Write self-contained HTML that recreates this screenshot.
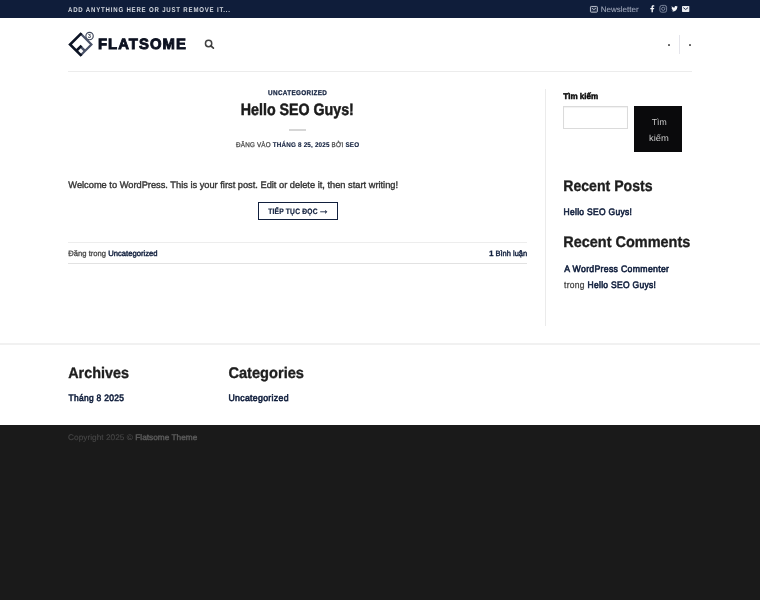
<!DOCTYPE html>
<html lang="vi">
<head>
<meta charset="utf-8">
<title>Flatsome</title>
<style>
html,body{margin:0;padding:0;}
body{width:760px;height:600px;position:relative;overflow:hidden;background:#1a1a1a;font-family:"Liberation Sans",sans-serif;}
#wrapper{position:absolute;left:0;top:0;width:760px;height:600px;will-change:transform;}
.g{position:absolute;left:0;top:0;width:0;height:0;margin:0;padding:0;border:0;}
.r{position:absolute;margin:0;padding:0;}
.t{position:absolute;margin:0;padding:0;white-space:nowrap;transform-origin:0 0;text-rendering:geometricPrecision;}
svg{position:absolute;overflow:visible;}
b,strong{font-weight:700;}
a{color:inherit;text-decoration:none;}
ul{list-style:none;}
input.r,button.r{font:inherit;outline:0;border-radius:0;-webkit-appearance:none;appearance:none;display:block;}
</style>
</head>
<body>
<div id="wrapper">

<!-- page backgrounds -->
<div class="r" style="left:0;top:0;width:760px;height:424.5px;background:#fff"></div>

<header class="g" id="header">
  <!-- top bar -->
  <div class="g" id="top-bar">
    <div class="r" style="left:0;top:0;width:760px;height:18px;background:#0f1d3a"></div>
    <strong class="t" style="left:0;top:0;font:700 7.0px/1 'Liberation Sans', sans-serif;color:#d4d8df;transform:translate(68.00px,7.00px) scaleX(0.8693);letter-spacing:0.910px;">ADD ANYTHING HERE OR JUST REMOVE IT...</strong>
    <a class="g" href="#">
      <svg style="left:588px;top:0" width="12" height="18" viewBox="588 0 12 18">
        <rect x="590.45" y="6.45" width="6.9" height="5.7" rx="0.7" fill="rgba(255,255,255,0.08)" stroke="#b9bfcb" stroke-width="1.0"/>
        <path d="M591.9 8.1 L593.9 9.7 L595.9 8.1" fill="none" stroke="#b9bfcb" stroke-width="0.9"/>
      </svg>
      <span class="t" style="left:0;top:0;font:400 7.9px/1 'Liberation Sans', sans-serif;color:#9ea6b8;transform:translate(600.65px,6.04px) scaleX(1.0177);-webkit-text-stroke:0.08px;">Newsletter</span>
    </a>
    <div class="g" id="social-icons">
      <a class="g" href="#" aria-label="Facebook"><svg style="left:648px;top:0" width="8" height="18" viewBox="648 0 8 18">
        <path d="M652.9 12.3 V9.2 H654 L654.2 7.9 H652.9 V7.1 C652.9 6.7 653 6.5 653.6 6.5 H654.3 V5.4 C654.1 5.4 653.7 5.3 653.2 5.3 C652.1 5.3 651.5 5.9 651.5 7 V7.9 H650.3 V9.2 H651.5 V12.3 Z" fill="#f4f5f7"/>
      </svg></a>
      <a class="g" href="#" aria-label="Instagram"><svg style="left:658px;top:0" width="10" height="18" viewBox="658 0 10 18">
        <rect x="659.9" y="5.4" width="6.7" height="6.8" rx="1.9" fill="none" stroke="#98a1b6" stroke-width="0.75"/>
        <circle cx="663.25" cy="8.8" r="1.6" fill="none" stroke="#98a1b6" stroke-width="0.75"/>
        <circle cx="665.2" cy="6.9" r="0.4" fill="#a9b0c0"/>
      </svg></a>
      <a class="g" href="#" aria-label="Twitter"><svg style="left:670px;top:0" width="10" height="18" viewBox="670 0 10 18">
        <path d="M677.9 6.7 C677.65 6.8 677.4 6.9 677.1 6.9 C677.4 6.75 677.6 6.5 677.7 6.15 C677.45 6.3 677.15 6.4 676.85 6.5 C676.6 6.2 676.25 6.05 675.85 6.05 C675.1 6.05 674.5 6.65 674.5 7.4 C674.5 7.5 674.5 7.6 674.55 7.7 C673.4 7.65 672.45 7.1 671.8 6.3 C671.7 6.5 671.6 6.75 671.6 7 C671.6 7.45 671.85 7.85 672.2 8.1 C672 8.1 671.8 8.05 671.6 7.95 C671.6 8.6 672.05 9.15 672.7 9.3 C672.5 9.35 672.3 9.35 672.1 9.3 C672.25 9.85 672.75 10.2 673.35 10.25 C672.8 10.65 672.1 10.9 671.35 10.8 C671.95 11.2 672.65 11.4 673.4 11.4 C675.85 11.4 677.2 9.35 677.2 7.6 L677.2 7.4 C677.5 7.2 677.7 6.95 677.9 6.7 Z" fill="#f4f5f7"/>
      </svg></a>
      <a class="g" href="#" aria-label="Email"><svg style="left:681px;top:0" width="10" height="18" viewBox="681 0 10 18">
        <rect x="682" y="5.9" width="7.3" height="6" rx="0.7" fill="#e9ebef"/>
        <path d="M683.3 7.6 L685.65 9.5 L688 7.6" fill="none" stroke="#0f1d3a" stroke-width="0.9"/>
      </svg></a>
    </div>
  </div>
  <!-- main header -->
  <div class="g" id="masthead">
    <a class="g" id="logo" href="#">
      <svg style="left:64px;top:28px" width="34" height="32" viewBox="64 28 34 32">
        <g transform="translate(80.6 44.5) rotate(45) translate(-8.75 -8.75)">
          <path d="M1.3 1.1 H16.4 V16.2" fill="none" stroke="#4a5268" stroke-width="2.2"/>
          <path d="M10.2 10.2 H16.4" fill="none" stroke="#4a5268" stroke-width="2.4"/>
          <path d="M1.3 0 V16.2 H17.5" fill="none" stroke="#0c1324" stroke-width="2.6"/>
          <path d="M10.2 8.9 V16.2" fill="none" stroke="#0c1324" stroke-width="2.6"/>
        </g>
        <circle cx="89.55" cy="36" r="3.7" fill="#fff" stroke="#3d455a" stroke-width="1.15"/>
        <text x="89.55" y="37.9" font-family="Liberation Sans, sans-serif" font-weight="700" font-size="5.2" text-anchor="middle" fill="#1f2638">3</text>
      </svg>
      <span class="t" style="left:0;top:0;font:700 15.0px/1 'Liberation Sans', sans-serif;color:#0c1120;transform:translate(97.95px,37.35px) scaleX(0.9904);letter-spacing:1.050px;-webkit-text-stroke:0.9px;">FLATSOME</span>
    </a>
    <a class="g" href="#" aria-label="Search">
      <svg style="left:200px;top:36px" width="20" height="18" viewBox="200 36 20 18">
        <circle cx="208.6" cy="43.5" r="3.15" fill="none" stroke="#404040" stroke-width="1.5"/>
        <path d="M210.9 45.8 L213.4 48.1" stroke="#3c3c3c" stroke-width="1.7" stroke-linecap="round"/>
      </svg>
    </a>
    <div class="r" style="left:667.5px;top:44px;width:2.6px;height:1.6px;background:#626262;border-radius:0.6px"></div>
    <div class="r" style="left:679px;top:35.4px;width:1px;height:18.4px;background:#e5e5eb"></div>
    <div class="r" style="left:688.6px;top:44px;width:2.6px;height:1.6px;background:#626262;border-radius:0.6px"></div>
    <div class="r" style="left:68px;top:71px;width:624px;height:1.2px;background:#ececec"></div>
  </div>
</header>

<main class="g" id="main">
  <article class="g">
    <a class="t" href="#" style="left:0;top:0;font:700 6.9px/1 'Liberation Sans', sans-serif;color:#12203e;transform:translate(268.10px,90.69px) scaleX(0.9217);letter-spacing:0.345px;-webkit-text-stroke:0.25px;">UNCATEGORIZED</a>
    <h1 class="t" style="left:0;top:0;font:700 16.4px/1 'Liberation Sans', sans-serif;color:#1b1b1b;transform:translate(240.80px,101.96px) scaleX(0.8678);-webkit-text-stroke:0.5px;">Hello SEO Guys!</h1>
    <div class="r" style="left:288.6px;top:128.5px;width:17.4px;height:2px;background:#d6d6d6"></div>
    <div class="t" style="left:0;top:0;font:400 6.9px/1 'Liberation Sans', sans-serif;color:#12203e;transform:translate(236.04px,142.74px) scaleX(0.9138);letter-spacing:0.207px;-webkit-text-stroke:0.12px;"><span style="color:#4c4c4c;-webkit-text-stroke:0.28px">ĐĂNG VÀO</span> <a href="#"><b>THÁNG 8 25, 2025</b></a> <span style="color:#4c4c4c;-webkit-text-stroke:0.28px">BỞI</span> <a href="#"><b>SEO</b></a></div>
    <p class="t" style="left:0;top:0;font:400 9.4px/1 'Liberation Sans', sans-serif;color:#343434;transform:translate(68.30px,180.26px) scaleX(0.9889);-webkit-text-stroke:0.36px;">Welcome to WordPress. This is your first post. Edit or delete it, then start writing!</p>
    <a class="g" href="#">
      <div class="r" style="left:258px;top:202.3px;width:79.5px;height:18px;box-sizing:border-box;border:1.5px solid #12203e"></div>
      <span class="t" style="left:0;top:0;font:700 7.8px/1 'Liberation Sans', sans-serif;color:#12203e;transform:translate(268.20px,207.92px) scaleX(0.8584);letter-spacing:0.234px;-webkit-text-stroke:0.22px;">TIẾP TỤC ĐỌC<span style="font-weight:400;font-size:1.7em;line-height:0;position:relative;top:0.15px;margin-left:0.2px;letter-spacing:0;-webkit-text-stroke:0.25px">→</span></span>
    </a>
    <footer class="g">
      <div class="r" style="left:68px;top:241.5px;width:459.3px;height:1px;background:#ededed"></div>
      <span class="t" style="left:0;top:0;font:400 7.8px/1 'Liberation Sans', sans-serif;color:#12203e;transform:translate(68.30px,249.52px) scaleX(0.9796);-webkit-text-stroke:0.42px;"><span style="color:#464646;-webkit-text-stroke:0.3px">Đăng trong</span> <a href="#">Uncategorized</a></span>
      <span class="t" style="left:0;top:0;font:400 7.8px/1 'Liberation Sans', sans-serif;color:#12203e;transform:translate(489.30px,249.52px) scaleX(0.9577);-webkit-text-stroke:0.42px;"><a href="#"><b>1</b> Bình luận</a></span>
      <div class="r" style="left:68px;top:262.6px;width:459.3px;height:1.5px;background:#e2e2e2"></div>
    </footer>
  </article>

  <aside class="g" id="sidebar">
    <div class="r" style="left:544.8px;top:88.5px;width:1px;height:237.3px;background:#ebebeb"></div>
    <form class="g" role="search">
      <label class="t" for="s" style="left:0;top:0;font:700 8.4px/1 'Liberation Sans', sans-serif;color:#0a0a0a;transform:translate(563.20px,91.81px) scaleX(0.9669);-webkit-text-stroke:0.45px;">Tìm kiếm</label>
      <input class="r" id="s" type="text" style="left:563.2px;top:106.1px;width:64.8px;height:23.4px;box-sizing:border-box;border:1.15px solid #dbdbdb;background:#fff;box-shadow:inset 0 1px 1px rgba(0,0,0,.06)">
      <button class="r" type="button" style="left:634px;top:106.2px;width:48.2px;height:45.6px;background:#0a0a0c;border:0"></button>
      <span class="t" style="left:0;top:0;font:400 8.8px/1 'Liberation Sans', sans-serif;color:#c8c8c8;transform:translate(651.65px,118.02px) scaleX(0.9897);">Tìm</span>
      <span class="t" style="left:0;top:0;font:400 8.8px/1 'Liberation Sans', sans-serif;color:#c8c8c8;transform:translate(648.95px,133.87px) scaleX(1.0686);">kiếm</span>
    </form>
    <section class="g">
      <h2 class="t" style="left:0;top:0;font:700 15.4px/1 'Liberation Sans', sans-serif;color:#1e1e1e;transform:translate(563.25px,178.71px) scaleX(0.9164);-webkit-text-stroke:0.35px;">Recent Posts</h2>
      <a class="t" href="#" style="left:0;top:0;font:400 9.4px/1 'Liberation Sans', sans-serif;color:#12203e;transform:translate(563.50px,206.71px) scaleX(0.9060);letter-spacing:0.329px;-webkit-text-stroke:0.6px;">Hello SEO Guys!</a>
    </section>
    <section class="g">
      <h2 class="t" style="left:0;top:0;font:700 15.4px/1 'Liberation Sans', sans-serif;color:#1e1e1e;transform:translate(563.25px,234.86px) scaleX(0.9403);-webkit-text-stroke:0.35px;">Recent Comments</h2>
      <a class="t" href="#" style="left:0;top:0;font:400 9.4px/1 'Liberation Sans', sans-serif;color:#12203e;transform:translate(564.25px,264.26px) scaleX(0.9292);letter-spacing:0.329px;-webkit-text-stroke:0.6px;">A WordPress Commenter</a>
      <span class="t" style="left:0;top:0;font:400 9.4px/1 'Liberation Sans', sans-serif;color:#12203e;transform:translate(564.00px,280.41px) scaleX(0.9059);letter-spacing:0.329px;-webkit-text-stroke:0.6px;"><span style="color:#444;-webkit-text-stroke:0.3px">trong</span> <a href="#">Hello SEO Guys!</a></span>
    </section>
  </aside>
</main>

<footer class="g" id="footer">
  <div class="r" style="left:0;top:343.1px;width:760px;height:1.6px;background:#f1f1f1"></div>
  <section class="g">
    <h2 class="t" style="left:0;top:0;font:700 15.4px/1 'Liberation Sans', sans-serif;color:#1e1e1e;transform:translate(68.25px,365.51px) scaleX(0.9331);-webkit-text-stroke:0.35px;">Archives</h2>
    <a class="t" href="#" style="left:0;top:0;font:400 9.4px/1 'Liberation Sans', sans-serif;color:#12203e;transform:translate(68.50px,392.76px) scaleX(0.9024);letter-spacing:0.329px;-webkit-text-stroke:0.6px;">Tháng 8 2025</a>
  </section>
  <section class="g">
    <h2 class="t" style="left:0;top:0;font:700 15.4px/1 'Liberation Sans', sans-serif;color:#1e1e1e;transform:translate(228.40px,365.51px) scaleX(0.9497);-webkit-text-stroke:0.35px;">Categories</h2>
    <a class="t" href="#" style="left:0;top:0;font:400 9.4px/1 'Liberation Sans', sans-serif;color:#12203e;transform:translate(228.40px,392.76px) scaleX(0.9333);letter-spacing:0.329px;-webkit-text-stroke:0.6px;">Uncategorized</a>
  </section>
  <div class="g" id="absolute-footer">
    <div class="r" style="left:0;top:424.5px;width:760px;height:175.5px;background:#1a1a1a"></div>
    <div class="t" style="left:0;top:0;font:400 8.1px/1 'Liberation Sans', sans-serif;color:#474747;transform:translate(68.10px,434.41px) scaleX(1.0267);-webkit-text-stroke:0.12px;">Copyright 2025 © <span style="color:#5e5e5e;-webkit-text-stroke:0.35px">Flatsome Theme</span></div>
  </div>
</footer>

</div>
</body>
</html>
